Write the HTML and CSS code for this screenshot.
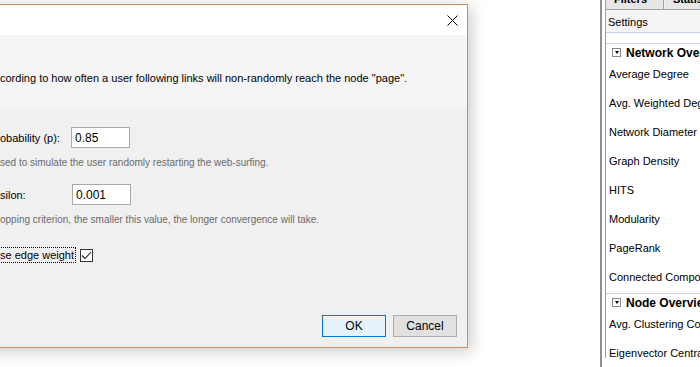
FILE: index.html
```html
<!doctype html>
<html lang="en">

<head>
  <meta charset="UTF-8">
  <title>PageRank settings</title>
  <link rel="stylesheet" href="styles.css">
</head>

<body>
  <div class="screen">
    <div class="dialog-area">
      <div class="dialog">
        <div class="titlebar">
          <svg class="close" width="11" height="11" viewBox="0 0 11 11">
            <path d="M0.5 0.5 L10.5 10.5 M10.5 0.5 L0.5 10.5" stroke="#000" stroke-width="1" fill="none"/>
          </svg>
        </div>
        <div class="dialog-body">
          <div class="intro">
            <p>cording to how often a user following links will non-randomly reach the node "page".</p>
          </div>
          <div class="params">
            <div class="field">
              <label class="field-label">obability (p):</label>
              <input class="field-input" type="text" value="0.85">
            </div>
            <p class="hint">sed to simulate the user randomly restarting the web-surfing.</p>
            <div class="field">
              <label class="field-label">silon:</label>
              <input class="field-input shifted" type="text" value="0.001">
            </div>
            <p class="hint">opping criterion, the smaller this value, the longer convergence will take.</p>
            <div class="check-row">
              <span class="focus-label">se edge weight</span>
              <span class="checkbox">
                <svg width="11" height="11" viewBox="0 0 11 11">
                  <path d="M1 5.5 L4 8.5 L10 2" stroke="#222" stroke-width="1.1" fill="none"/>
                </svg>
              </span>
            </div>
          </div>
          <div class="buttons">
            <button class="btn btn-default">OK</button>
            <button class="btn">Cancel</button>
          </div>
        </div>
      </div>
    </div>

    <aside class="panel">
      <div class="panel-inner">
        <div class="tabs">
          <span class="tab">Filters</span>
          <span class="tab">Statistics</span>
        </div>
        <div class="settings-bar">Settings</div>
        <div class="stats">
          <div class="group-head"><span class="toggle"></span>Network Overview</div>
          <div class="stat">Average Degree</div>
          <div class="stat">Avg. Weighted Degree</div>
          <div class="stat">Network Diameter</div>
          <div class="stat">Graph Density</div>
          <div class="stat">HITS</div>
          <div class="stat">Modularity</div>
          <div class="stat">PageRank</div>
          <div class="stat">Connected Components</div>
          <div class="group-head"><span class="toggle"></span>Node Overview</div>
          <div class="stat">Avg. Clustering Coefficient</div>
          <div class="stat">Eigenvector Centrality</div>
        </div>
      </div>
    </aside>
  </div>
</body>
</html>
```

FILE: styles.css
```css
html, body {
  margin: 0;
  height: 100%;
  overflow: hidden;
  background: #ffffff;
  font-family: "Liberation Sans", Arial, sans-serif;
  font-size: 11px;
  color: #000000;
}

.screen {
  display: flex;
  height: 100%;
}

.dialog-area {
  width: 600px;
  flex: none;
}

/* dialog, cut off by the left edge of the window */
.dialog {
  width: 489px;
  height: 344px;
  margin: 4px 0 0 -21px;
  box-sizing: border-box;
  border: 1px solid #cf8d5c;
  background: #f0f0f0;
  display: flex;
  flex-direction: column;
  box-shadow: 3px 3px 15px rgba(0, 0, 0, 0.22);
}

.titlebar {
  height: 30px;
  flex: none;
  background: #ffffff;
  display: flex;
  align-items: center;
  justify-content: flex-end;
  padding-right: 9px;
}

.dialog-body {
  flex: 1;
  display: flex;
  flex-direction: column;
  padding-left: 20px;
}

.intro {
  height: 72px;
  margin-left: -20px;
  padding-left: 20px;
  background: #f5f5f5;
  display: flex;
  align-items: center;
  padding-top: 14px;
  box-sizing: border-box;
}

.intro p {
  margin: 0;
}

.params {
  padding-top: 20px;
}

.field {
  display: grid;
  grid-template-columns: 71px 59px;
  align-items: center;
  height: 21px;
}

.field-input {
  width: 59px;
  height: 21px;
  box-sizing: border-box;
  border: 1px solid #a9a9a9;
  background: #ffffff;
  padding: 0 3px;
  font: inherit;
  font-size: 12px;
}

.field-input.shifted {
  margin-left: 1px;
}

.hint {
  margin: 8px 0 14px;
  line-height: 14px;
  font-size: 10px;
  color: #6b6b6b;
}

.check-row {
  margin-top: 21px;
  display: flex;
  align-items: center;
  gap: 5px;
}

.focus-label {
  outline: 1px dotted #000000;
  line-height: 14px;
  padding-right: 1px;
}

.checkbox {
  width: 13px;
  height: 13px;
  box-sizing: border-box;
  border: 1px solid #333333;
  background: #ffffff;
  display: flex;
  align-items: center;
  justify-content: center;
}

.buttons {
  margin-top: auto;
  padding: 0 10px 10px 0;
  display: flex;
  justify-content: flex-end;
  gap: 7px;
}

.btn {
  width: 64px;
  height: 22px;
  box-sizing: border-box;
  border: 1px solid #adadad;
  background: #e1e1e1;
  font: inherit;
  font-size: 12px;
  padding: 0;
}

.btn-default {
  border-color: #0078d7;
  background: #e5f1fb;
}

/* statistics panel on the right */
.panel {
  flex: 1;
  border-left: 2px solid #8f8f8f;
  padding-left: 3px;
  background: #ffffff;
}

.panel-inner {
  height: 100%;
  border-left: 1px solid #a0a0a0;
}

.tabs {
  display: flex;
  height: 18px;
  margin-top: -9px;
  border-bottom: 1px solid #a0a0a0;
  background: #f0f0f0;
}

.tab {
  width: 58px;
  padding-left: 8px;
  border-right: 1px solid #a0a0a0;
  line-height: 17px;
  font-weight: bold;
  background: #e6e6e6;
  box-sizing: border-box;
}

.tab + .tab {
  width: auto;
  margin-left: 1px;
  padding-right: 8px;
}

.settings-bar {
  height: 22px;
  line-height: 24px;
  padding-left: 2px;
  background: #f5f5f5;
  border-bottom: 1px solid #c8d3e3;
}

.stats {
  padding-top: 10px;
  white-space: nowrap;
}

.group-head {
  height: 17px;
  border-top: 1px solid #c8d3e3;
  display: flex;
  align-items: center;
  gap: 5px;
  padding-left: 6px;
  font-weight: bold;
  font-size: 12px;
}

.toggle {
  width: 9px;
  height: 9px;
  box-sizing: border-box;
  border: 1px solid #8a8a8a;
  background: #ffffff;
  display: flex;
  align-items: center;
  justify-content: center;
}

.toggle::after {
  content: "";
  border-left: 2.5px solid transparent;
  border-right: 2.5px solid transparent;
  border-top: 3px solid #000000;
}

.stat {
  height: 29px;
  box-sizing: border-box;
  padding: 6px 0 0 3px;
  line-height: 14px;
}
```
